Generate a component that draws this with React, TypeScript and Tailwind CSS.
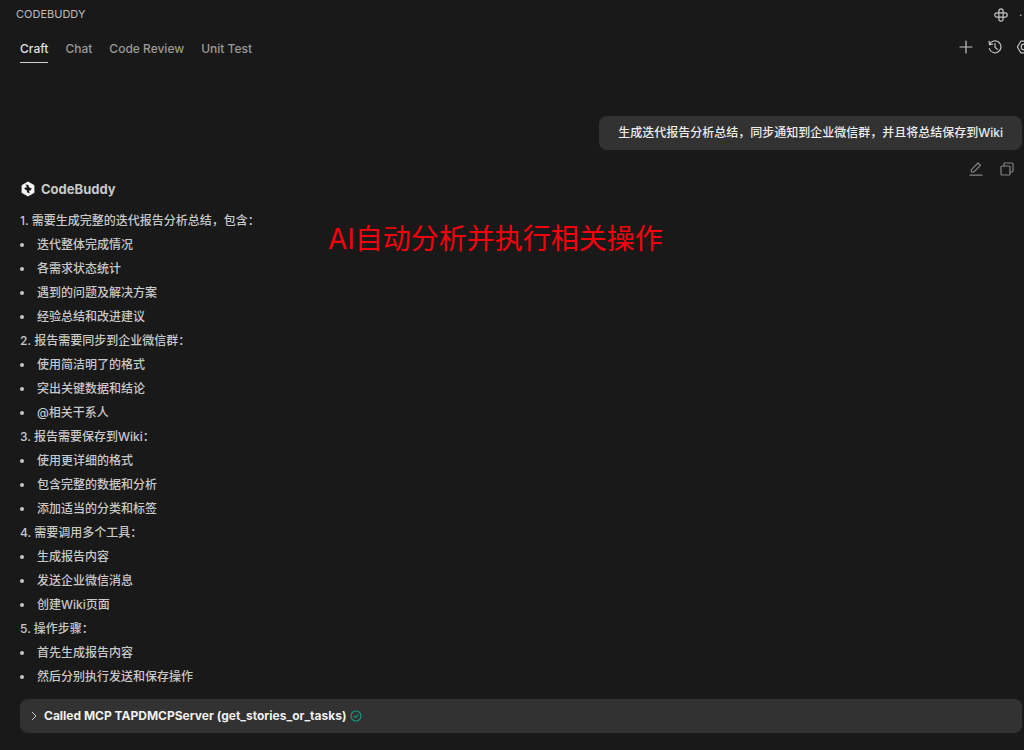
import type { ReactNode } from 'react';
import clsx from 'clsx';

const tabs = ['Craft', 'Chat', 'Code Review', 'Unit Test'];

const plan = [
  {
    title: '需要生成完整的迭代报告分析总结，包含：',
    items: ['迭代整体完成情况', '各需求状态统计', '遇到的问题及解决方案', '经验总结和改进建议'],
  },
  {
    title: '报告需要同步到企业微信群：',
    items: ['使用简洁明了的格式', '突出关键数据和结论', '@相关干系人'],
  },
  {
    title: '报告需要保存到Wiki：',
    items: ['使用更详细的格式', '包含完整的数据和分析', '添加适当的分类和标签'],
  },
  {
    title: '需要调用多个工具：',
    items: ['生成报告内容', '发送企业微信消息', '创建Wiki页面'],
  },
  {
    title: '操作步骤：',
    items: ['首先生成报告内容', '然后分别执行发送和保存操作'],
  },
];

function IconButton({ label, children }: { label: string; children: ReactNode }) {
  return (
    <button aria-label={label} className="flex size-4 shrink-0 items-center justify-center">
      {children}
    </button>
  );
}

function Icon({ children }: { children: ReactNode }) {
  return (
    <svg
      viewBox="0 0 16 16"
      className="size-4"
      fill="none"
      stroke="currentColor"
      strokeWidth="1.2"
      strokeLinecap="round"
      strokeLinejoin="round"
    >
      {children}
    </svg>
  );
}

function Logo() {
  return (
    <svg viewBox="0 0 16 16" className="size-4" fill="none">
      <path
        d="M8 1.4 13.6 4.6V11.4L8 14.6 2.4 11.4V4.6Z"
        fill="#f4f4f4"
        stroke="#f4f4f4"
        strokeWidth="1.6"
        strokeLinejoin="round"
      />
      <path d="M5.6 3.6 8.4 4 9 6.2 11.8 7.4 10.6 9.6 8.8 9.8 9.8 12.2 7.2 11.6 6.8 9.4 4.2 7.8 5.2 6.4 7 6.2Z" fill="#1a1a1a" />
    </svg>
  );
}

export default function App() {
  return (
    <div className="min-h-screen overflow-hidden bg-[#191919] pb-4 font-['Inter','Noto_Sans_CJK_SC',sans-serif] text-[#c8c8c8]">
      {/* Title bar */}
      <header className="flex h-[29px] items-center justify-between pl-4">
        <h1 className="text-[11px] text-[#bdbdbd]">CODEBUDDY</h1>
        <div className="-mr-3 flex items-center gap-[11px] text-[#c4c4c4]">
          <IconButton label="Switch layout">
            <Icon>
              <rect x="5.9" y="1.8" width="4.2" height="12.4" rx="2.1" />
              <rect x="1.8" y="5.9" width="12.4" height="4.2" rx="2.1" />
            </Icon>
          </IconButton>
          <IconButton label="More">
            <svg viewBox="0 0 16 16" className="size-4" fill="currentColor">
              <circle cx="0.8" cy="8.3" r="0.8" />
              <circle cx="6" cy="8.3" r="0.8" />
              <circle cx="11.2" cy="8.3" r="0.8" />
            </svg>
          </IconButton>
        </div>
      </header>

      {/* Tabs */}
      <div className="flex items-start justify-between pt-2 pl-5">
        <nav className="flex gap-[17px] text-xs leading-6 font-medium">
          {tabs.map((tab, i) => (
            <button
              key={tab}
              className={clsx('border-b pb-px', i === 0 ? 'border-[#d0d0d0] text-[#e0e0e0]' : 'border-transparent text-[#9a9a9a]')}
            >
              {tab}
            </button>
          ))}
        </nav>
        <div className="-mr-2 flex gap-[13px] pt-0.5 text-[#c4c4c4]">
          <IconButton label="New chat">
            <Icon>
              <path d="M8 2v12M2 8h12" />
            </Icon>
          </IconButton>
          <IconButton label="History">
            <Icon>
              <path d="M2.5 5.5A6 6 0 1 1 2.3 9.6M2.1 2.4 2.5 5.6 5.6 5.2M8 4.6V8.3L10.4 10.4" />
            </Icon>
          </IconButton>
          <IconButton label="Settings">
            <Icon>
              <path d="M4.8 2.2H11.2L14.6 8 11.2 13.8H4.8L1.4 8Z" />
              <circle cx="8" cy="8" r="2.8" />
            </Icon>
          </IconButton>
        </div>
      </div>

      <main className="pt-[53px] pr-0.5 pl-5 text-xs leading-6 font-medium">
        {/* User message */}
        <div className="flex flex-col items-end">
          <p className="rounded-lg bg-[#323232] px-[19px] py-1 leading-[26px] text-[#ececec]">
            生成迭代报告分析总结，同步通知到企业微信群，并且将总结保存到Wiki
          </p>
          <div className="flex gap-[15px] pt-[11px] pr-[7px] text-[#848484]">
            <IconButton label="Edit message">
              <Icon>
                <path d="M2 14.2H14M3.4 8.6 10 2 12.4 4.3 5.8 11H3.4Z" />
              </Icon>
            </IconButton>
            <IconButton label="Copy message">
              <Icon>
                <path d="M5 5V3a1 1 0 0 1 1-1h7a1 1 0 0 1 1 1v7a1 1 0 0 1-1 1h-2" />
                <rect x="2" y="5" width="9" height="9" rx="1" />
              </Icon>
            </IconButton>
          </div>
        </div>

        {/* Reply */}
        <section className="relative">
          <h2 className="flex items-center gap-[5px] text-[13px] leading-6 font-bold">
            <Logo />
            CodeBuddy
          </h2>
          <ol className="pt-2">
            {plan.map((step, i) => (
              <li key={step.title}>
                <p>
                  {i + 1}. {step.title}
                </p>
                <ul>
                  {step.items.map((item) => (
                    <li key={item} className="flex items-center gap-[13px]">
                      <span className="size-1 rounded-full bg-current" />
                      {item}
                    </li>
                  ))}
                </ul>
              </li>
            ))}
          </ol>
          <p className="absolute top-[42px] left-77 text-[28px] leading-10 font-normal text-[#f5000c]">
            AI自动分析并执行相关操作
          </p>
        </section>

        {/* Tool call */}
        <button className="mt-2.5 flex w-full items-center gap-1 rounded-lg bg-[#323232] px-2 py-1 leading-[26px] font-bold text-[#f0f0f0]">
          <svg viewBox="0 0 12 12" className="size-3" fill="none" stroke="#c8c8c8" strokeWidth="1">
            <path d="M4 2 8 6 4 10" />
          </svg>
          Called MCP TAPDMCPServer (get_stories_or_tasks)
          <svg viewBox="0 0 12 12" className="size-3" fill="none" stroke="#0aa583" strokeWidth="1.1">
            <circle cx="6" cy="6" r="5" />
            <path d="M3.8 6.1 5.4 7.6 8.4 4.6" />
          </svg>
        </button>
      </main>
    </div>
  );
}
